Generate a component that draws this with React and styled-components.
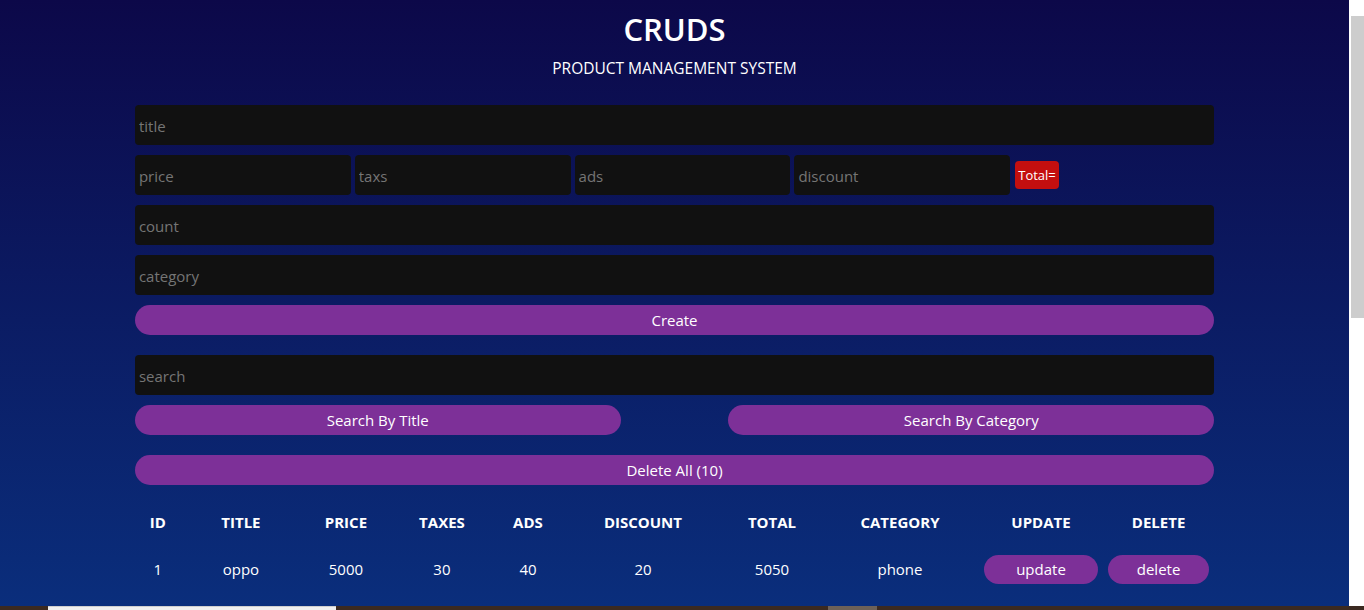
import React from "react";
import styled, { createGlobalStyle } from "styled-components";

const products = [
  { id: 1, title: "oppo", price: 5000, taxes: 30, ads: 40, discount: 20, total: 5050, category: "phone" },
];

const colWidths = [46, 120, 90, 102, 70, 160, 98, 158, 124, 111];
const headers = ["id", "title", "price", "taxes", "ads", "discount", "total", "category", "update", "delete"];

const GlobalStyle = createGlobalStyle`
  html, body {
    margin: 0;
    padding: 0;
    height: 610px;
    overflow: hidden;
  }
  body {
    font-family: "Open Sans", "Noto Sans", sans-serif;
    color: #fff;
  }
  * { box-sizing: border-box; }
`;

// Estrutura da janela: conteúdo, barra de rolagem e faixa inferior
const Screen = styled.div`
  display: grid;
  grid-template-columns: 1fr 15px;
  grid-template-rows: 606px 4px;
  width: 1364px;
  height: 610px;
`;

const Main = styled.main`
  background: linear-gradient(#0c0849, #0a2e7c);
  overflow: hidden;
`;

const Scrollbar = styled.div`
  background: #fff;
  padding: 16px 0 0 2px;
`;

const Thumb = styled.div`
  width: 13px;
  height: 302px;
  background: #cdcdcd;
`;

const Taskbar = styled.div`
  grid-column: 1 / 3;
  display: flex;
  background: #3b2a21;
`;

const TaskItem = styled.div`
  margin-left: ${(p) => p.$left}px;
  width: ${(p) => p.$width}px;
  background: ${(p) => p.$color};
  border-top: 1px solid ${(p) => p.$border};
`;

const Crud = styled.div`
  width: 80%;
  margin: 0 auto;
`;

const Head = styled.div`
  text-align: center;
  text-transform: uppercase;
  padding-top: 8px;
`;

const Titulo = styled.h2`
  margin: 0;
  font-size: 31px;
  line-height: 42px;
  font-weight: 600;
`;

const Sub = styled.p`
  margin: 8px 0 0;
  font-size: 15.5px;
  line-height: 20px;
`;

const Stack = styled.div`
  display: flex;
  flex-direction: column;
  gap: 10px;
  margin-top: ${(p) => p.$top}px;
`;

const Input = styled.input`
  display: block;
  width: ${(p) => p.$width || "100%"};
  height: 40px;
  border: none;
  outline: none;
  background: #111;
  border-radius: 4px;
  padding: 5px 4px 3px;
  color: #fff;
  font-family: inherit;
  font-size: 15px;

  &::placeholder {
    color: #757575;
  }
`;

const PriceRow = styled.div`
  display: flex;
  align-items: center;
  gap: 4px;
`;

const Total = styled.small`
  margin-left: 1px;
  background: #c40f0f;
  border-radius: 4px;
  padding: 5px 3px;
  font-size: 13px;
  line-height: 18px;
`;

const Button = styled.button`
  width: ${(p) => p.$width || "100%"};
  height: ${(p) => p.$height || 30}px;
  border: none;
  cursor: pointer;
  background: #7d3098;
  color: #fff;
  border-radius: 20px;
  font-family: inherit;
  font-size: 15px;
  padding: 0;
`;

const BtnSearch = styled.div`
  display: flex;
  justify-content: space-between;
`;

const Table = styled.table`
  width: 100%;
  margin-top: 10px;
  border-collapse: collapse;
  table-layout: fixed;
  text-align: center;
`;

const Th = styled.th`
  height: 54px;
  padding: 0 5px;
  text-transform: uppercase;
  font-size: 15px;
  font-weight: 700;
`;

const Td = styled.td`
  height: 40px;
  padding: 0 5px;
  font-size: 15px;
`;

export default function App() {
  return (
    <>
      <GlobalStyle />
      <Screen>
        <Main>
          <Crud>
            <Head>
              <Titulo>cruds</Titulo>
              <Sub>product management system</Sub>
            </Head>

            <Stack $top={27}>
              <Input placeholder="title" />
              <PriceRow>
                <Input $width="20%" placeholder="price" />
                <Input $width="20%" placeholder="taxs" />
                <Input $width="20%" placeholder="ads" />
                <Input $width="20%" placeholder="discount" />
                <Total>Total=</Total>
              </PriceRow>
              <Input placeholder="count" />
              <Input placeholder="category" />
              <Button>Create</Button>
            </Stack>

            <Stack $top={20}>
              <Input placeholder="search" />
              <BtnSearch>
                <Button $width="45%">Search By Title</Button>
                <Button $width="45%">Search By Category</Button>
              </BtnSearch>
            </Stack>

            <Stack $top={20}>
              <Button>Delete All (10)</Button>
            </Stack>

            <Table>
              <colgroup>
                {colWidths.map((w, i) => (
                  <col key={i} style={{ width: w }} />
                ))}
              </colgroup>
              <thead>
                <tr>
                  {headers.map((h) => (
                    <Th key={h}>{h}</Th>
                  ))}
                </tr>
              </thead>
              <tbody>
                {products.map((p) => (
                  <tr key={p.id}>
                    <Td>{p.id}</Td>
                    <Td>{p.title}</Td>
                    <Td>{p.price}</Td>
                    <Td>{p.taxes}</Td>
                    <Td>{p.ads}</Td>
                    <Td>{p.discount}</Td>
                    <Td>{p.total}</Td>
                    <Td>{p.category}</Td>
                    <Td><Button $height={29}>update</Button></Td>
                    <Td><Button $height={29}>delete</Button></Td>
                  </tr>
                ))}
              </tbody>
            </Table>
          </Crud>
        </Main>
        <Scrollbar>
          <Thumb />
        </Scrollbar>
        <Taskbar>
          <TaskItem $left={48} $width={288} $color="#f0f0f0" $border="#cfcfcf" />
          <TaskItem $left={492} $width={49} $color="#6d6158" $border="#6d6158" />
        </Taskbar>
      </Screen>
    </>
  );
}
